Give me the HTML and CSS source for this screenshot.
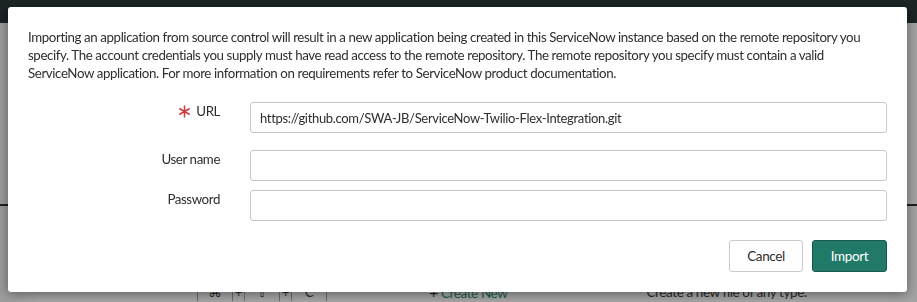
FILE: index.html
```html
<!DOCTYPE html>
<html lang="en">
<head>
  <meta charset="UTF-8">
  <title>Import Application</title>
  <link rel="stylesheet" href="styles.css">
</head>
<body>
  <!-- Page behind the dialog -->
  <div class="page">
    <div class="page-header"></div>
    <div class="page-body">
      <div class="page-line"></div>
      <div class="shortcut-row">
        <div class="shortcut-keys">
          <span class="key">⌘</span><span class="plus">+</span><span class="key key-shift">⇧</span><span class="plus">+</span><span class="key">C</span>
        </div>
        <div class="create-new"><span class="create-plus">+</span> Create New</div>
        <div class="create-desc">Create a new file of any type.</div>
      </div>
    </div>
  </div>

  <!-- Import dialog -->
  <div class="modal">
    <p class="intro">Importing an application from source control will result in a new application being created in this ServiceNow instance based on the remote repository you specify. The account credentials you supply must have read access to the remote repository. The remote repository you specify must contain a valid ServiceNow application. For more information on requirements refer to ServiceNow product documentation.</p>

    <div class="form-row form-row-url">
      <label for="repoUrl">
        <svg class="required" width="13" height="13" viewBox="0 0 13 13" aria-hidden="true">
          <path d="M6.5 0.5 V12.5 M1.3 3.5 L11.7 9.5 M1.3 9.5 L11.7 3.5" stroke="#d0383c" stroke-width="1.5" fill="none"/>
        </svg>
        URL
      </label>
      <input type="text" id="repoUrl" value="https://github.com/SWA-JB/ServiceNow-Twilio-Flex-Integration.git">
    </div>

    <div class="form-row form-row-user">
      <label for="userName">User name</label>
      <input type="text" id="userName">
    </div>

    <div class="form-row">
      <label for="password">Password</label>
      <input type="password" id="password">
    </div>

    <div class="modal-footer">
      <button class="btn btn-cancel">Cancel</button>
      <button class="btn btn-import">Import</button>
    </div>
  </div>
</body>
</html>
```

FILE: styles.css
```css
/* Reset default styles */
* {
  margin: 0;
  padding: 0;
  box-sizing: border-box;
  font-family: Lato, "Open Sans", Arial, sans-serif;
  letter-spacing: -0.4px;
}

body {
  width: 917px;
  height: 302px;
  overflow: hidden;
  background: #a7a7a7;
  color: #2e2e2e;
}

/* Page behind the dialog */
.page {
  display: flex;
  flex-direction: column;
  height: 302px;
}

.page-header {
  height: 32px;
  background: #1c2426;
}

.page-body {
  flex: 1;
  display: flex;
  flex-direction: column;
  background: linear-gradient(90deg, #9c9c9c 0, #a8a8a8 40px, #a8a8a8 880px, #a3a3a3 917px);
}

.page-line {
  height: 2px;
  margin-top: 181px;
  background: #1f1f1f;
}

.shortcut-row {
  display: flex;
  align-items: flex-start;
  margin-top: 77px;
  font-size: 13.5px;
  line-height: 18px;
  color: #2a2a2a;
}

.shortcut-keys {
  display: flex;
  margin-left: 197px;
  border-left: 1px solid #6e6e6e;
  border-right: 1px solid #6e6e6e;
}

.shortcut-keys .key {
  width: 34px;
  text-align: center;
}

.shortcut-keys .key-shift {
  font-family: "DejaVu Sans", sans-serif;
}

.shortcut-keys .plus {
  width: 13px;
  text-align: center;
  border-left: 1px solid #6e6e6e;
  border-right: 1px solid #6e6e6e;
}

.create-new {
  margin-left: 102px;
  color: #1a5e50;
}

.create-plus {
  font-size: 16px;
  color: #2a2a2a;
}

.create-desc {
  margin-left: 139px;
}

/* Import dialog */
.modal {
  position: fixed;
  top: 7px;
  left: 8px;
  width: 899px;
  height: 285px;
  background: #fff;
  border-radius: 3px;
  box-shadow: 0 2px 12px rgba(0, 0, 0, 0.45);
  padding: 21px 20px 20px 20px;
}

.intro {
  font-size: 13.3px;
  line-height: 18px;
  color: #2e2e2e;
  margin-bottom: 20px;
}

.form-row {
  display: flex;
  align-items: flex-start;
}

.form-row-url {
  margin-bottom: 17px;
}

.form-row-user {
  margin-bottom: 9px;
}

.form-row label {
  display: flex;
  justify-content: flex-end;
  align-items: center;
  gap: 5px;
  width: 192px;
  margin-right: 30px;
  font-size: 13.3px;
  line-height: 18px;
  color: #2e2e2e;
}

.required {
  flex-shrink: 0;
}

.form-row input {
  flex: 1;
  height: 31px;
  padding: 0 9px;
  border: 1px solid #c9c9c9;
  border-radius: 3px;
  font-size: 13px;
  letter-spacing: -0.32px;
  color: #2e2e2e;
  outline: none;
}

/* Footer buttons */
.modal-footer {
  display: flex;
  justify-content: flex-end;
  gap: 9px;
  margin-top: 19px;
}

.btn {
  height: 32px;
  border-radius: 3px;
  font-size: 13.5px;
  cursor: pointer;
}

.btn-cancel {
  width: 74px;
  background: #fff;
  border: 1px solid #c9c9c9;
  color: #2e2e2e;
}

.btn-import {
  width: 75px;
  background: #217a68;
  border: 1px solid #175a4c;
  color: #fff;
}
```
